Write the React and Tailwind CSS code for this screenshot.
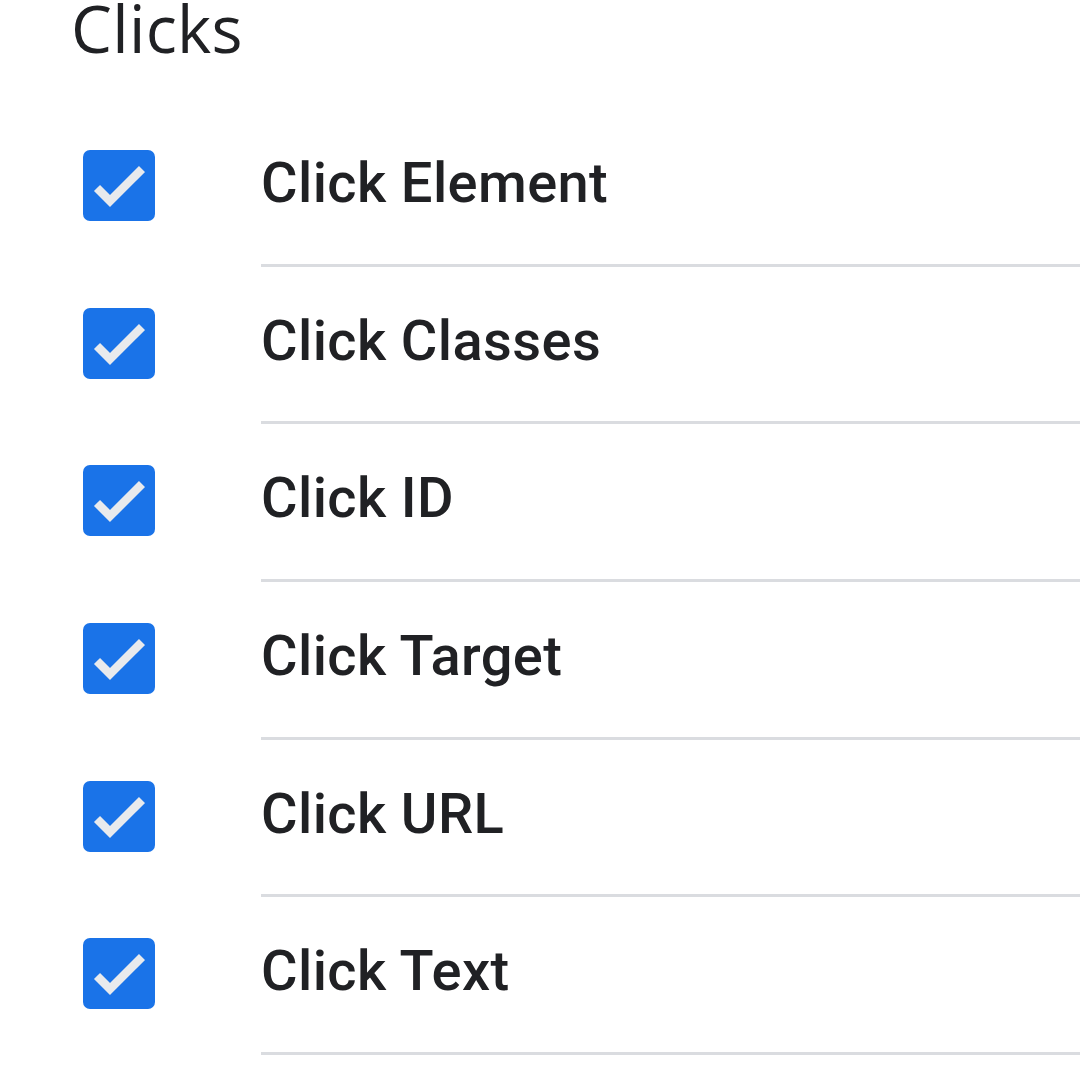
import React from "react";

const items = ["Click Element", "Click Classes", "Click ID", "Click Target", "Click URL", "Click Text"];

function Check() {
  return (
    <div className="w-[72px] h-[71px] shrink-0 rounded-[7px] bg-[#1a73e8] ml-[83px] -mt-[5px]">
      <svg width="72" height="71" viewBox="0 0 72 71">
        <polyline points="14,38 27,51 59,19" fill="none" stroke="#e8eaed" strokeWidth="8.5" strokeLinejoin="miter" />
      </svg>
    </div>
  );
}

export default function App() {
  return (
    <div className="w-[1080px] h-[1080px] overflow-hidden bg-white" style={{ fontFamily: "Roboto, 'Liberation Sans', sans-serif" }}>
      <div className="flex pl-[71px] h-[109px]">
        <div className="text-[65px] leading-none text-[#202124] -mt-[4px] tracking-[0.3px]" style={{ fontFamily: "'Open Sans', Roboto, sans-serif" }}>Clicks</div>
      </div>
      <div className="flex flex-col">
        {items.map((t) => (
          <div key={t} className="flex items-center">
            <Check />
            <div className="ml-[106px] flex-1 h-[157.7px] border-b-[3px] border-[#dadce0] flex items-center">
              <span className="text-[56px] font-medium text-[#202124] leading-none -mt-[7px] tracking-[0.4px]">{t}</span>
            </div>
          </div>
        ))}
      </div>
    </div>
  );
}
